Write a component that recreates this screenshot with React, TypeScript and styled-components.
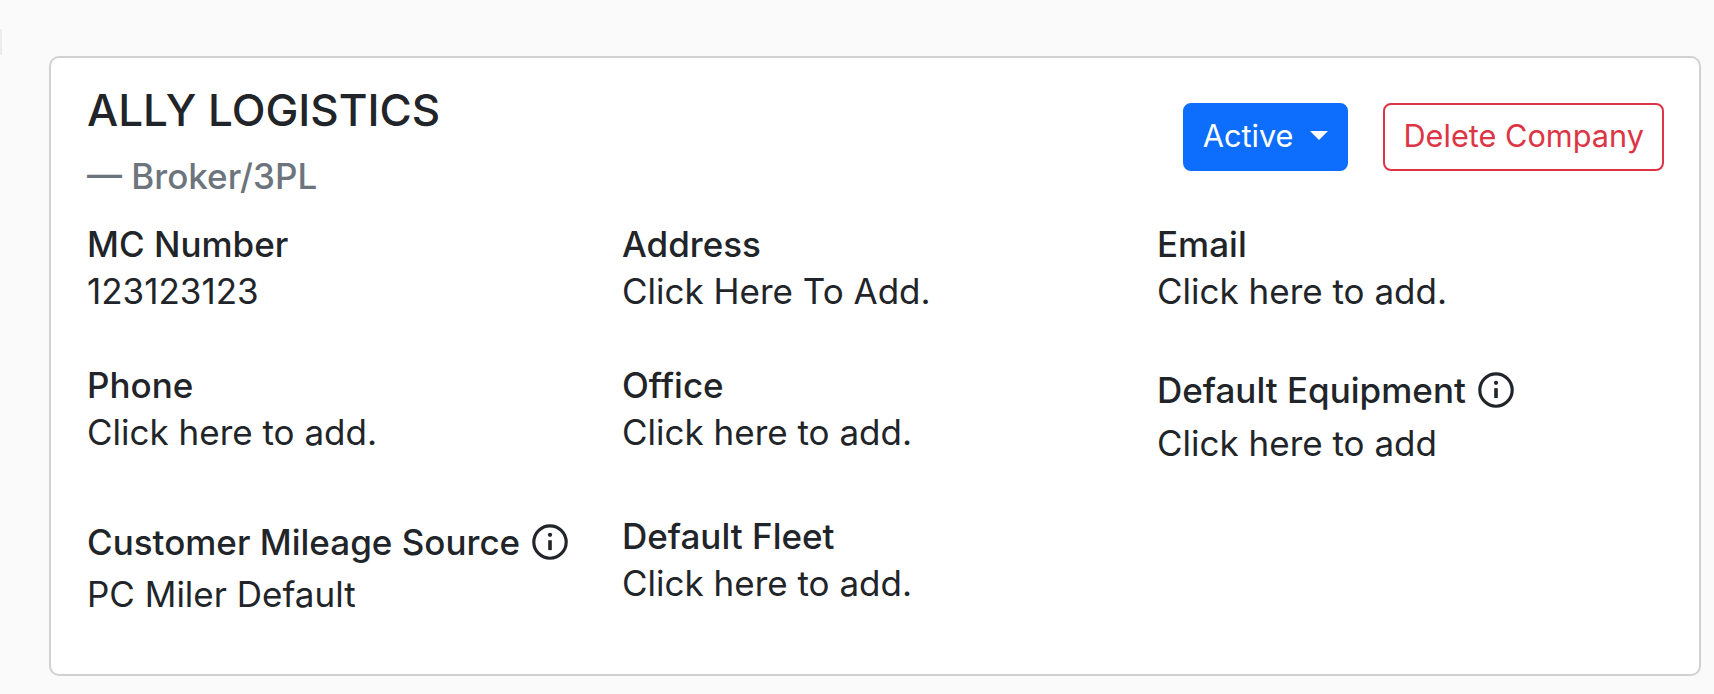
import React, { FC } from 'react';
import styled, { createGlobalStyle } from 'styled-components';

const GlobalStyle = createGlobalStyle`
	html, body {
		margin: 0;
		height: 100%;
		overflow: hidden;
		background: #fafafa;
		font-family: 'Inter', 'Liberation Sans', sans-serif;
		color: #212529;
	}
`;

const Page = styled('div')`
	position: relative;
	height: 694px;
	padding: 56px 13px 0 49px;
	box-sizing: border-box;
`;

const EdgeTab = styled('div')`
	position: absolute;
	left: 0;
	top: 29px;
	width: 2px;
	height: 26px;
	background: #ececec;
`;

const Card = styled('section')`
	box-sizing: border-box;
	height: 620px;
	padding: 26px 35px 0 36px;
	background: #ffffff;
	border: 2px solid #d1d1d1;
	border-radius: 10px;
`;

const Header = styled('header')`
	display: flex;
	justify-content: space-between;
	align-items: flex-start;
	height: 136px;
`;

const Title = styled('h4')`
	margin: 0;
	font-size: 44px;
	font-weight: 500;
	line-height: 53px;
`;

const Subtitle = styled('div')`
	margin-top: 18px;
	font-size: 35px;
	font-weight: 500;
	line-height: 42px;
	color: #6c757d;
`;

const Actions = styled('div')`
	display: flex;
	gap: 35px;
	margin-top: 19px;
`;

const Button = styled('button')<{ $variant: 'primary' | 'danger' }>`
	display: flex;
	align-items: center;
	height: 68px;
	padding: 0 18px 3px;
	font-family: inherit;
	font-size: 30.7px;
	border-radius: 8px;
	border: 2px solid ${(p) => (p.$variant === 'primary' ? '#0d6efd' : '#dc3545')};
	background: ${(p) => (p.$variant === 'primary' ? '#0d6efd' : '#ffffff')};
	color: ${(p) => (p.$variant === 'primary' ? '#ffffff' : '#dc3545')};
`;

const Caret = styled('span')`
	margin-left: 17px;
	margin-bottom: 1px;
	border-top: 9px solid #ffffff;
	border-left: 9px solid transparent;
	border-right: 9px solid transparent;
`;

const Grid = styled('div')`
	display: grid;
	grid-template-columns: repeat(3, 535px);
	align-items: start;
`;

const Field = styled('div')`
	margin-bottom: 45.5px;
`;

const Label = styled('div')<{ $icon?: boolean }>`
	display: flex;
	align-items: center;
	gap: 12px;
	height: ${(p) => (p.$icon ? 59 : 48)}px;
	font-size: 35px;
	font-weight: 500;
`;

const Value = styled('div')`
	height: 47px;
	line-height: 47px;
	font-size: 35px;
`;

const InfoIcon: FC = () => (
	<svg width="36" height="36" viewBox="0 0 16 16" fill="none" stroke="currentColor">
		<circle cx="8" cy="8" r="7.2" strokeWidth="1.4" />
		<path d="M8 7.2v4.4" strokeWidth="1.6" />
		<circle cx="8" cy="4.8" r="0.95" fill="currentColor" stroke="none" />
	</svg>
);

const fields: { label: string; value: string; info?: boolean }[] = [
	{ label: 'MC Number', value: '123123123' },
	{ label: 'Address', value: 'Click Here To Add.' },
	{ label: 'Email', value: 'Click here to add.' },
	{ label: 'Phone', value: 'Click here to add.' },
	{ label: 'Office', value: 'Click here to add.' },
	{ label: 'Default Equipment', value: 'Click here to add', info: true },
	{ label: 'Customer Mileage Source', value: 'PC Miler Default', info: true },
	{ label: 'Default Fleet', value: 'Click here to add.' },
];

const App: FC = () => (
	<Page>
		<GlobalStyle />
		<EdgeTab />
		<Card>
			<Header>
				<div>
					<Title>{'ALLY LOGISTICS'}</Title>
					<Subtitle>{'— Broker/3PL'}</Subtitle>
				</div>
				<Actions>
					<Button $variant="primary">
						{'Active'}
						<Caret />
					</Button>
					<Button $variant="danger">{'Delete Company'}</Button>
				</Actions>
			</Header>
			<Grid>
				{fields.map((f) => (
					<Field key={f.label}>
						<Label $icon={f.info}>
							{f.label}
							{f.info && <InfoIcon />}
						</Label>
						<Value>{f.value}</Value>
					</Field>
				))}
			</Grid>
		</Card>
	</Page>
);

export default App;
